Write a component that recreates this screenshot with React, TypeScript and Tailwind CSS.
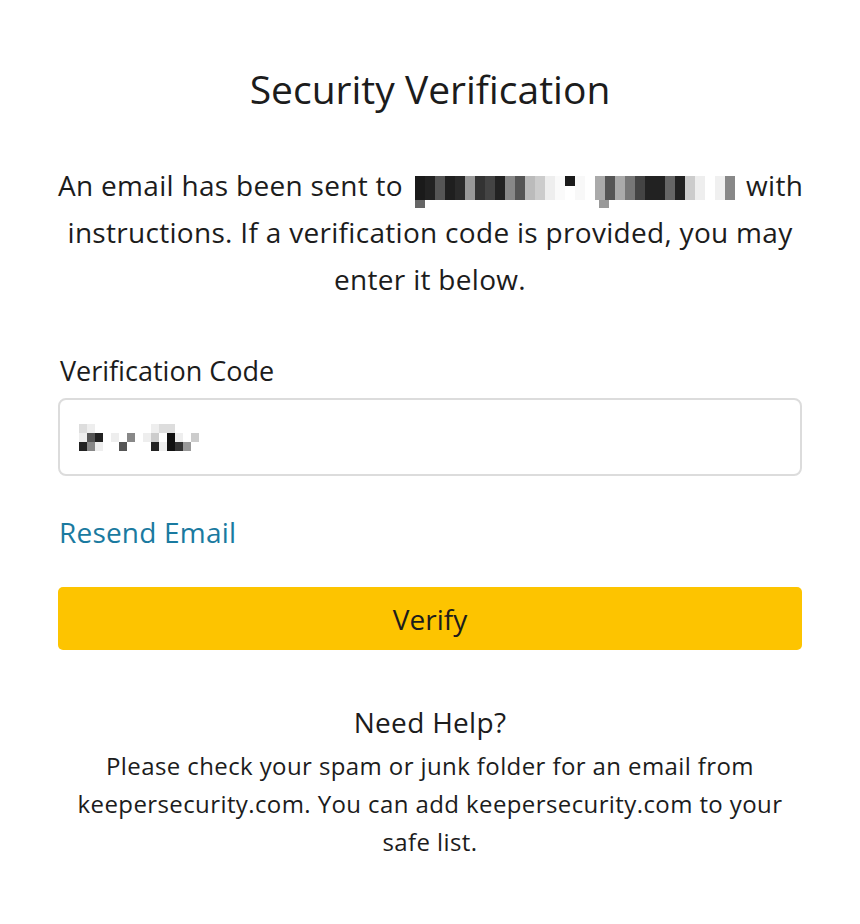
import React from 'react'

// Pixelated redaction of the email address, one gray per 10px column
const EMAIL_PIX: string[] = [
  '#1a1a1a', '#222', '#555', '#1f1f1f', '#2a2a2a', '#999', '#333', '#444', '#222', '#888',
  '#555', '#bbb', '#ccc', '#eee', '#fafafa', '#fff', '#f8f8f8', '#fff', '#aaa', '#555',
  '#aaa', '#777', '#444', '#222', '#222', '#666', '#222', '#ccc', '#eee', '#fff',
  '#f0f0f0', '#888',
]

// Pixelated redaction of the code: 3 rows x 15 cols
const CODE_PIX: string[][] = [
  ['#ddd', '#eee', '#fff', '#fff', '#fff', '#fff', '#fff', '#fff', '#fff', '#eee', '#ddd', '#ddd', '#fff', '#fff', '#fff'],
  ['#eee', '#555', '#222', '#fff', '#eee', '#fff', '#888', '#fff', '#eee', '#ccc', '#fff', '#111', '#eee', '#fff', '#ccc'],
  ['#222', '#888', '#eee', '#fff', '#fff', '#555', '#fff', '#fff', '#fff', '#222', '#eee', '#111', '#333', '#999', '#fff'],
]

function EmailRedacted() {
  return (
    <span className="relative inline-flex align-[-4px] h-[24px] mx-[4px]">
      {EMAIL_PIX.map((c, i) => (
        <span key={i} className="w-[10px] h-[24px]" style={{ backgroundColor: c }} />
      ))}
      <span className="absolute left-0 top-[24px] w-[10px] h-[8px] bg-[#666]" />
      <span className="absolute left-[184px] top-[24px] w-[10px] h-[8px] bg-[#999]" />
      <span className="absolute left-[150px] top-0 w-[10px] h-[10px] bg-[#1a1a1a]" />
    </span>
  )
}

function CodeRedacted() {
  return (
    <div className="flex flex-col">
      {CODE_PIX.map((row, r) => (
        <div key={r} className="flex">
          {row.map((c, i) => (
            <span key={i} className="w-[8px] h-[9px]" style={{ backgroundColor: c }} />
          ))}
        </div>
      ))}
    </div>
  )
}

export default function App() {
  return (
    <div className="min-h-[924px] bg-white text-[#1c1c1c] font-['Open_Sans','Noto_Sans',sans-serif]">
      <div className="w-[744px] mx-auto pt-[67px] flex flex-col">
        <h1 className="text-center text-[39px] leading-[44px] font-normal">
          Security Verification
        </h1>

        <p className="mt-[51px] text-center text-[28px] leading-[47px] tracking-[0.3px] whitespace-nowrap">
          An email has been sent to <EmailRedacted /> with
          <br />
          instructions. If a verification code is provided, you may
          <br />
          enter it below.
        </p>

        <label className="mt-[52px] text-[27px] leading-[32px] pl-[2px]">Verification Code</label>
        <div className="mt-[11px] h-[78px] border-2 border-[#dcdcdc] rounded-[8px] flex items-center pl-[19px]">
          <CodeRedacted />
        </div>

        <a className="mt-[40px] text-[28px] leading-[32px] tracking-[0.2px] text-[#1a7aa0] pl-[1px] cursor-pointer w-fit">
          Resend Email
        </a>

        <button className="mt-[39px] h-[63px] rounded-[5px] bg-[#fdc400] text-[28px] text-[#1c1c1c]">
          Verify
        </button>

        <div className="mt-[56px] text-center text-[28px] leading-[32px] tracking-[0.3px]">Need Help?</div>
        <p className="mt-[9px] text-center text-[24px] leading-[38px] tracking-[0.4px] whitespace-nowrap">
          Please check your spam or junk folder for an email from
          <br />
          keepersecurity.com. You can add keepersecurity.com to your
          <br />
          safe list.
        </p>
      </div>
    </div>
  )
}
